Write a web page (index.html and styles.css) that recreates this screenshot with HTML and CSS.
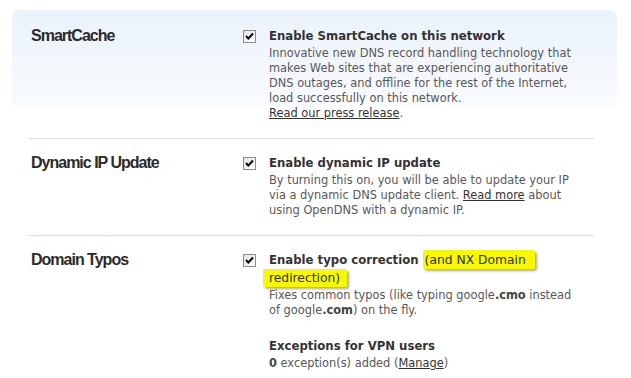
FILE: index.html
```html
<!DOCTYPE html>
<html lang="en">
<head>
    <meta charset="UTF-8">
    <meta name="viewport" content="width=device-width, initial-scale=1.0">
    <title>Advanced Settings</title>
    <link rel="stylesheet" href="styles.css">
</head>
<body>
    <div class="settings-panel">
        <div class="setting">
            <h2 class="setting-name">SmartCache</h2>
            <span class="checkbox checked"><svg viewBox="0 0 11 11" width="11" height="11"><path d="M2 5 L4.3 7.6 L9 2.5" fill="none" stroke="#000" stroke-width="2"/></svg></span>
            <div class="setting-body">
                <div class="option-title">Enable SmartCache on this network</div>
                <p class="option-desc">
                    Innovative new DNS record handling technology that makes Web sites that are experiencing authoritative DNS outages, and offline for the rest of the Internet, load successfully on this network.<br>
                    <a href="#">Read our press release</a>.
                </p>
            </div>
        </div>

        <div class="setting">
            <h2 class="setting-name">Dynamic IP Update</h2>
            <span class="checkbox checked"><svg viewBox="0 0 11 11" width="11" height="11"><path d="M2 5 L4.3 7.6 L9 2.5" fill="none" stroke="#000" stroke-width="2"/></svg></span>
            <div class="setting-body">
                <div class="option-title">Enable dynamic IP update</div>
                <p class="option-desc">
                    By turning this on, you will be able to update your IP via a dynamic DNS update client. <a href="#">Read more</a> about using OpenDNS with a dynamic IP.
                </p>
            </div>
        </div>

        <div class="setting">
            <h2 class="setting-name">Domain Typos</h2>
            <span class="checkbox checked"><svg viewBox="0 0 11 11" width="11" height="11"><path d="M2 5 L4.3 7.6 L9 2.5" fill="none" stroke="#000" stroke-width="2"/></svg></span>
            <div class="setting-body">
                <div class="option-title">Enable typo correction <span class="note note-first">(and NX Domain</span><br><span class="note note-next">redirection)</span></div>
                <p class="option-desc">
                    Fixes common typos (like typing google<b>.cmo</b> instead of google<b>.com</b>) on the fly.
                </p>

                <div class="option-title sub-title">Exceptions for VPN users</div>
                <p class="option-desc"><b>0</b> exception(s) added (<a href="#">Manage</a>)</p>
            </div>
        </div>
    </div>
</body>
</html>
```

FILE: styles.css
```css
* {
    box-sizing: border-box;
    margin: 0;
    padding: 0;
}

body {
    background: #fff;
    font-family: "DejaVu Sans", Verdana, sans-serif;
}

.settings-panel {
    margin: 10px 14px 0 12px;
    padding-top: 2px;
    border-radius: 8px 8px 0 0;
    background: linear-gradient(to bottom, #eaf2fb 0, #f9fbfe 96px, #fff 97px);
}

.setting {
    display: grid;
    grid-template-columns: 214px 26px 1fr;
    align-items: start;
    margin: 0 23px 0 17px;
    padding: 15px 0 17px;
}

.setting + .setting {
    border-top: 1px solid #dedede;
}

.setting-name {
    padding-left: 2px;
    font-family: "Liberation Sans", Arial, sans-serif;
    font-size: 16px;
    line-height: 18px;
    letter-spacing: -1px;
    font-weight: bold;
    color: #2b2b2b;
}

.checkbox {
    display: flex;
    align-items: center;
    justify-content: center;
    width: 13px;
    height: 13px;
    margin-top: 3px;
    border: 1px solid #8c8c8c;
    background: linear-gradient(135deg, #e4e4e4, #fff);
}

.setting-body {
    max-width: 310px;
}

.option-title {
    font-size: 11.7px;
    line-height: 18px;
    font-weight: bold;
    color: #333;
}

.option-desc {
    margin-top: 1px;
    font-size: 11.4px;
    line-height: 15px;
    color: #585858;
}

.option-desc b {
    color: #444;
}

.option-desc a {
    color: #333;
    text-decoration: underline;
}

.sub-title {
    margin-top: 19px;
}

.note {
    font-size: 12.3px;
    font-weight: normal;
    color: #333;
    background: #f8f800;
    border-radius: 2px;
    box-shadow: 2px 2px 3px rgba(0, 0, 0, 0.35);
    padding: 3px 9px 2px 2px;
}

.note-next {
    margin-left: -6px;
    padding: 2px 7px 2px 6px;
}
```
